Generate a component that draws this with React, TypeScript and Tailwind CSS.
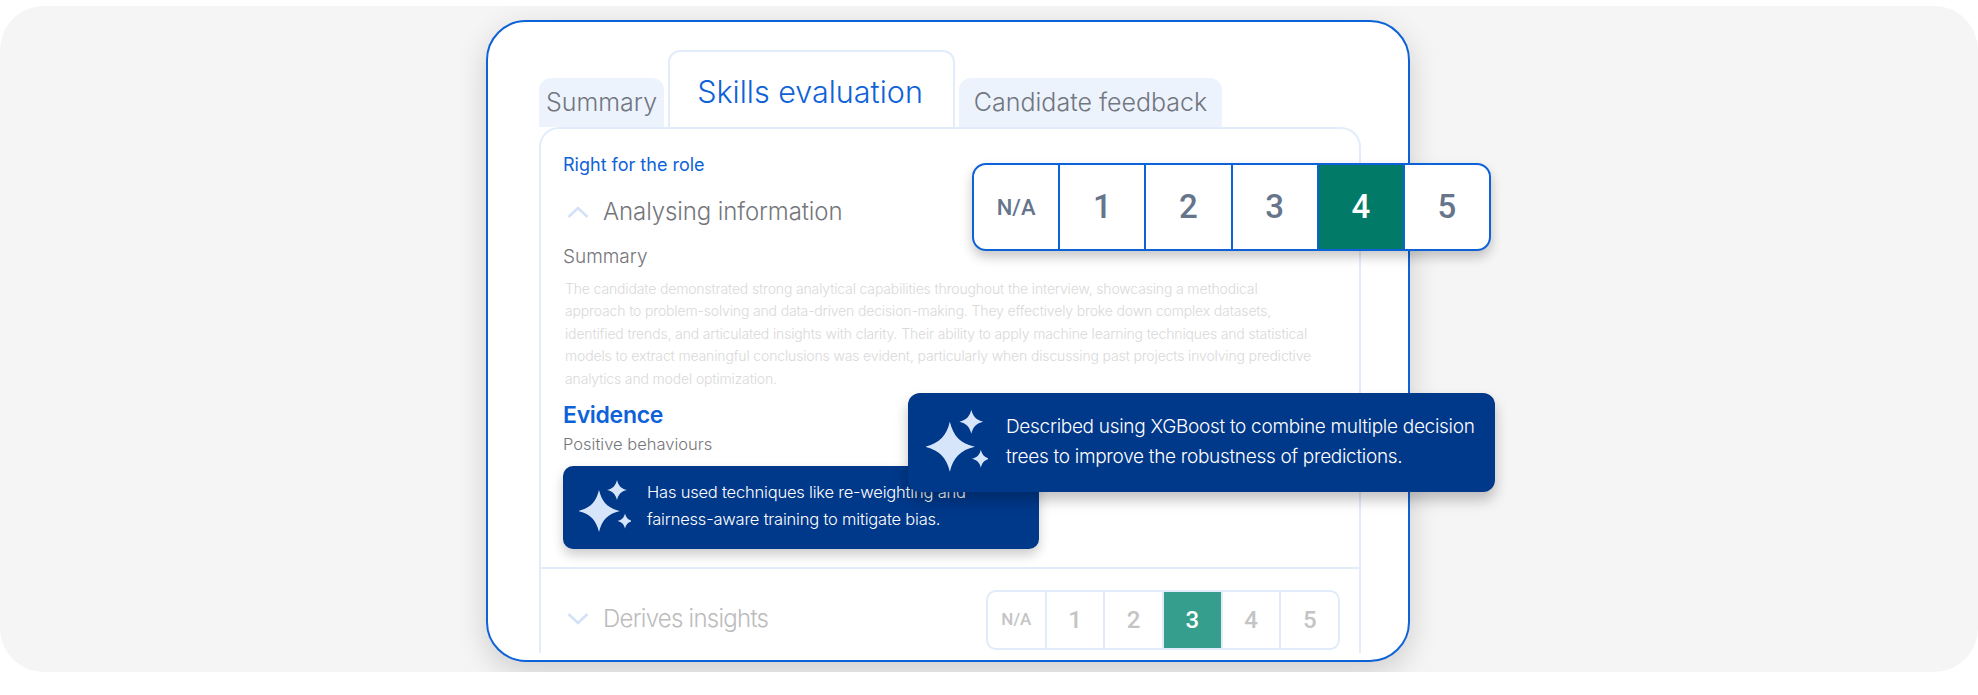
import React from 'react'

const scores = ['N/A', '1', '2', '3', '4', '5']

const paragraph = [
  'The candidate demonstrated strong analytical capabilities throughout the interview, showcasing a methodical',
  'approach to problem-solving and data-driven decision-making. They effectively broke down complex datasets,',
  'identified trends, and articulated insights with clarity. Their ability to apply machine learning techniques and statistical',
  'models to extract meaningful conclusions was evident, particularly when discussing past projects involving predictive',
  'analytics and model optimization.',
]

const star = (x: number, y: number, r: number) =>
  `M${x} ${y - r}C${x + r * 0.14} ${y - r * 0.42} ${x + r * 0.42} ${y - r * 0.14} ${x + r} ${y}C${x + r * 0.42} ${y + r * 0.14} ${x + r * 0.14} ${y + r * 0.42} ${x} ${y + r}C${x - r * 0.14} ${y + r * 0.42} ${x - r * 0.42} ${y + r * 0.14} ${x - r} ${y}C${x - r * 0.42} ${y - r * 0.14} ${x - r * 0.14} ${y - r * 0.42} ${x} ${y - r}Z`

const Sparkles = ({ className }: { className: string }) => (
  <svg viewBox="0 0 52 54" className={className} fill="#d6e5fa">
    <path d={star(20, 31, 21)} />
    <path d={star(38, 10, 10)} />
    <path d={star(46, 41, 7.5)} />
  </svg>
)

const Chevron = ({ up }: { up?: boolean }) => (
  <svg width="22" height="12" viewBox="0 0 22 12" fill="none" stroke="#d3e2f8" strokeWidth="2.6">
    <path d={up ? 'M1.5 11L11 2L20.5 11' : 'M1.5 1L11 10L20.5 1'} />
  </svg>
)

const BigRating = () => (
  <div className="absolute left-[484px] top-[141px] z-20 flex h-[88px] w-[519px] overflow-hidden rounded-[14px] border-2 border-[#0e62d8] bg-white shadow-[0_6px_12px_rgba(0,0,0,0.22)] font-['Roboto',sans-serif]">
    {scores.map((s, i) => (
      <div
        key={s}
        className={`flex flex-1 items-center justify-center font-medium ${i > 0 ? 'border-l-2 border-[#0e62d8]' : ''} ${s === '4' ? 'bg-[#027a68] text-white' : 'text-[#66758c]'} ${s === 'N/A' ? 'text-[22px]' : 'text-[33px]'}`}
      >
        {s}
      </div>
    ))}
  </div>
)

const SmallRating = () => (
  <div className="flex h-[60px] w-[354px] overflow-hidden rounded-[10px] border-2 border-[#e1ebfa] bg-white font-['Roboto',sans-serif] font-medium text-[#c4c4c4]">
    {scores.map((s, i) => (
      <div
        key={s}
        className={`flex flex-1 items-center justify-center ${i > 0 ? 'border-l-2 border-[#e1ebfa]' : ''} ${s === '3' ? 'bg-[#359e8c] text-white' : ''} ${s === 'N/A' ? 'text-[17px]' : 'text-[24px]'}`}
      >
        {s}
      </div>
    ))}
  </div>
)

export default function App() {
  return (
    <div className="h-[695px] overflow-hidden bg-white pt-[6px] font-['Inter',sans-serif]">
      <div className="h-[666px] overflow-hidden rounded-[44px] bg-[#f5f5f5] pl-[486px] pt-[14px]">
        <div className="relative h-[642px] w-[924px] rounded-[40px] border-2 border-[#0e62d8] bg-white pl-[51px] pt-[28px] shadow-[0_10px_30px_rgba(0,0,0,0.16)]">
          <div className="flex items-end gap-[4px] pr-[48px]">
            <div className="flex h-[49px] w-[125px] items-center justify-center rounded-t-[12px] bg-[#edf3fd] text-[25px] font-light text-[#71767f]">
              Summary
            </div>
            <div className="flex h-[77px] w-[287px] items-center justify-center rounded-t-[12px] border-2 border-b-0 border-[#e3ecfb] pr-[3px] pt-[4px] text-[30.5px] font-light text-[#0e62d8]">
              Skills evaluation
            </div>
            <div className="flex h-[49px] w-[263px] items-center justify-center rounded-t-[12px] bg-[#edf3fd] text-[25px] font-light text-[#71767f]">
              Candidate feedback
            </div>
          </div>

          <div className="h-[526px] w-[822px] rounded-t-[20px] border-x-2 border-t-2 border-[#e3ecfb]">
            <div className="border-b-2 border-[#e3ecfb] pb-[18px] pl-[22px] pt-[24px]">
              <p className="text-[18px] leading-[24px] text-[#0e62d8]">Right for the role</p>
              <div className="mt-[19px] flex h-[32px] items-center gap-[14px] pl-[4px]">
                <Chevron up />
                <span className="text-[24px] font-light tracking-[-0.1px] text-[#74767c]">Analysing information</span>
              </div>
              <p className="mt-[17px] text-[19px] font-light leading-[24px] text-[#75767a]">Summary</p>
              <div className="mt-[9px] pl-[2px] text-[14px] font-light leading-[22.4px] tracking-[-0.15px] whitespace-nowrap text-[#d9d9d9]">
                {paragraph.map((line) => (
                  <div key={line}>{line}</div>
                ))}
              </div>
              <p className="mt-[10px] text-[23px] font-semibold leading-[30px] tracking-[-0.3px] text-[#0e62d8]">Evidence</p>
              <p className="mt-[3px] text-[16.5px] font-light leading-[22px] text-[#75767a]">Positive behaviours</p>
              <div className="mt-[11px] flex h-[83px] w-[476px] gap-[16px] rounded-[10px] bg-[#00388a] pl-[16px] pt-[13px] shadow-[0_6px_12px_rgba(0,0,0,0.2)]">
                <Sparkles className="h-[56px] w-[52px]" />
                <p className="text-[16.5px] font-light leading-[27px] tracking-[-0.2px] text-white">
                  Has used techniques like re-weighting and
                  <br />
                  fairness-aware training to mitigate bias.
                </p>
              </div>
            </div>
            <div className="flex items-start justify-between pl-[26px] pr-[19px] pt-[21px]">
              <div className="flex h-[58px] items-center gap-[14px]">
                <Chevron />
                <span className="text-[24px] font-light tracking-[-0.75px] text-[#bcbcbc]">Derives insights</span>
              </div>
              <SmallRating />
            </div>
          </div>

          <BigRating />

          <div className="absolute left-[420px] top-[371px] z-10 flex h-[99px] w-[587px] items-center gap-[18px] rounded-[12px] bg-[#00388a] pb-[2px] pl-[18px] shadow-[0_8px_14px_rgba(0,0,0,0.24)]">
            <Sparkles className="h-[66px] w-[62px]" />
            <p className="text-[19px] font-light leading-[30px] tracking-[-0.3px] text-white">
              Described using XGBoost to combine multiple decision
              <br />
              trees to improve the robustness of predictions.
            </p>
          </div>
        </div>
      </div>
    </div>
  )
}
